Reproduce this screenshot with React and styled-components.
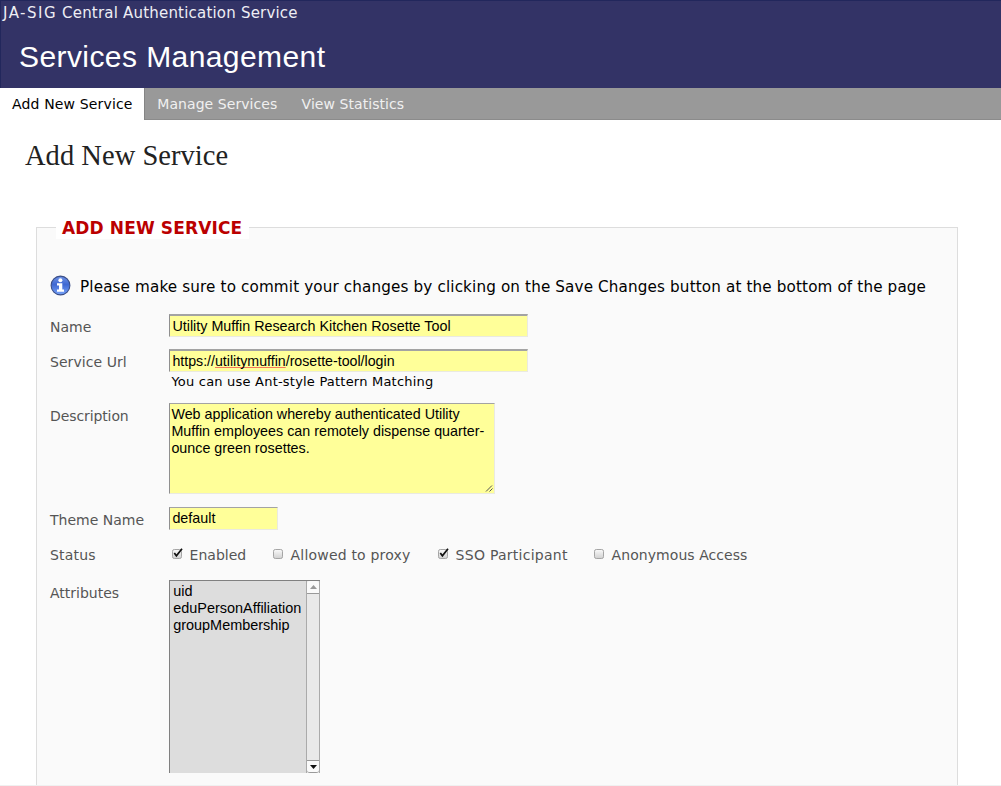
import React from "react";
import styled, { createGlobalStyle } from "styled-components";

const sans = `"DejaVu Sans", Verdana, sans-serif`;
const arial = `"Liberation Sans", Arial, sans-serif`;

const Global = createGlobalStyle`
  * { box-sizing: border-box; }
  body { margin: 0; background: #fff; overflow: hidden; }
`;
const Page = styled.div`
  width: 1001px;
  height: 786px;
  overflow: hidden;
  font-family: ${sans};
  color: #000;
  white-space: nowrap;
  border-bottom: 1px solid #f0f0f0;
`;
const Header = styled.header`
  height: 88px;
  background: #333366;
  border-top: 1px solid #22275c;
  border-left: 1px solid #22275c;
  color: #fff;
`;
const Brand = styled.div`
  padding: 3px 0 0 2px;
  font-size: 15px;
  line-height: 19px;
  letter-spacing: 0.2px;
  color: #eeeef4;
`;
const Wide = styled.span`
  letter-spacing: 1.5px;
`;
const AppTitle = styled.h1`
  margin: 16px 0 0 18px;
  font: 400 30px/36px ${arial};
  letter-spacing: 0.42px;
`;
const Tabs = styled.nav`
  display: flex;
  height: 32px;
  background: #999;
  border-bottom: 1px solid #8b8b8b;
`;
const Tab = styled.a`
  height: 32px;
  padding: 0 12px 0 12.3px;
  font-size: 14px;
  line-height: 32px;
  letter-spacing: ${(p) => (p.$active ? 0.15 : 0.06)}px;
  color: ${(p) => (p.$active ? "#000" : "#f0f0f0")};
  background: ${(p) => (p.$active ? "#fff" : "transparent")};
  ${(p) => p.$active && "width: 145px; padding: 0 0 0 12px; border-right: 1px solid #858585;"}
`;
const PageTitle = styled.h2`
  margin: 18px 0 0 25px;
  font: 400 28.5px/36px "Liberation Serif", "Times New Roman", serif;
  letter-spacing: 0.04px;
  color: #222;
`;
const Panel = styled.section`
  margin: 53px 43px 0 36px;
  height: 600px;
  background: #fafafa;
  border: 1px solid #ddd;
  padding-left: 13px;
`;
const Legend = styled.h3`
  width: 193px;
  height: 22px;
  margin: -11px 0 0 6px;
  padding-left: 6px;
  background: #fff;
  color: #bb0000;
  font-size: 17px;
  line-height: 23px;
  letter-spacing: 0.13px;
`;
const Notice = styled.p`
  display: flex;
  align-items: center;
  gap: 9px;
  margin: 35px 0 18px;
  height: 22px;
  font-size: 15.2px;
  line-height: 24px;
  letter-spacing: 0.135px;
`;
const NoticeText = styled.span`
  padding-top: 4px;
`;
const Row = styled.div`
  display: grid;
  grid-template-columns: 119px 1fr;
  align-items: start;
  height: ${(p) => p.$h}px;
`;
const Label = styled.label`
  padding-top: 3px;
  font-size: 14px;
  line-height: 20px;
  letter-spacing: ${(p) => p.$ls ?? 0}px;
  color: #555;
`;
const Field = styled.div`
  display: flex;
  justify-content: space-between;
  width: ${(p) => p.$w}px;
  height: 23px;
  padding-left: 2.4px;
  background: #ffff99;
  border: 1px solid #eaeae0;
  border-top: ${(p) => p.$edge ?? 2}px solid #a3a3a3;
  border-left: 1px solid #8f8f8f;
  font: ${(p) => p.$size ?? 14.33}px/21px ${arial};
`;
const Area = styled(Field)`
  height: 91px;
  padding: 2px 0 0 1.4px;
  line-height: 17px;
  white-space: pre-line;
`;
const Misspelt = styled.span`
  text-decoration: underline solid #f5785c 1px;
  text-decoration-skip-ink: none;
  text-underline-offset: 1px;
`;
const Grip = styled.svg`
  align-self: flex-end;
  flex: none;
`;
const Hint = styled.div`
  padding: 0 0 0 2.4px;
  font-size: 13px;
  line-height: 20px;
  letter-spacing: 0.21px;
`;
const Options = styled.div`
  display: flex;
  padding-top: 3px;
  color: #555;
  font-size: 14px;
  line-height: 20px;
`;
const Option = styled.div`
  display: flex;
  align-items: center;
  gap: 6px;
  width: ${(p) => p.$w}px;
  padding-left: 1.6px;
  letter-spacing: ${(p) => p.$ls ?? 0}px;
`;
const List = styled.div`
  display: flex;
  justify-content: space-between;
  width: 151px;
  height: 193px;
  background: #ddd;
  border-top: 1px solid #808080;
  border-left: 1px solid #808080;
  font: 14.45px/17px ${arial};
`;
const Items = styled.div`
  padding: 2px 0 0 3.2px;
`;
const Scroll = styled.div`
  display: flex;
  flex-direction: column;
  justify-content: space-between;
  width: 14px;
  background: #e9e9e9;
  border-left: 1px solid #aaa;
  border-right: 1px solid #aaa;
`;
const ScrollButton = styled.div`
  display: flex;
  align-items: center;
  justify-content: center;
  height: 13px;
  background: #fafafa;
  border-top: ${(p) => (p.$down ? "1px solid #999" : "0")};
  border-bottom: 1px solid #999;
  border-radius: ${(p) => (p.$down ? "0 0 3px 3px" : "3px 3px 0 0")};
`;

const InfoIcon = () => (
  <svg width="21" height="21" viewBox="0 0 21 21">
    <defs>
      <linearGradient id="info" x1="0" y1="0" x2="0" y2="1">
        <stop offset="0" stopColor="#6f93e6" />
        <stop offset=".45" stopColor="#3f68d2" />
        <stop offset="1" stopColor="#78a4fa" />
      </linearGradient>
    </defs>
    <circle cx="10.5" cy="10.5" r="9.4" fill="url(#info)" stroke="#3b4f88" strokeWidth="1.1" />
    <circle cx="10.4" cy="5.2" r="2" fill="#fff" />
    <path d="M7 8.2h5.3v6.3H14v2.2H7v-2.2h2v-4.1H7z" fill="#fff" />
  </svg>
);
const Check = ({ on }) => (
  <svg width="13" height="14" viewBox="0 0 13 14">
    <defs>
      <linearGradient id="box" x1="0" y1="0" x2="0" y2="1">
        <stop offset="0" stopColor="#fafafa" />
        <stop offset="1" stopColor="#d0d0d0" />
      </linearGradient>
    </defs>
    <rect x="1.5" y="1.5" width="9" height="9" rx="1.8" fill="url(#box)" stroke="#a5a5a5" />
    {on && <path d="M3.3 5 5.4 7.8 11 0.8" fill="none" stroke="#111" strokeWidth="1.7" />}
  </svg>
);

export default function App() {
  return (
    <Page>
      <Global />
      <Header>
        <Brand><Wide>JA-SIG</Wide> Central Authentication Service</Brand>
        <AppTitle>Services Management</AppTitle>
      </Header>
      <Tabs>
        <Tab $active>Add New Service</Tab>
        <Tab>Manage Services</Tab>
        <Tab>View Statistics</Tab>
      </Tabs>
      <PageTitle>Add New Service</PageTitle>
      <Panel>
        <Legend>ADD NEW SERVICE</Legend>
        <Notice>
          <InfoIcon />
          <NoticeText>Please make sure to commit your changes by clicking on the Save Changes button at the bottom of the page</NoticeText>
        </Notice>
        <Row $h={35}>
          <Label>Name</Label>
          <Field $w={359}><span>Utility Muffin Research Kitchen Rosette Tool</span></Field>
        </Row>
        <Row $h={54}>
          <Label $ls={0.06}>Service Url</Label>
          <div>
            <Field $w={359} $size={14.2}><span>https://<Misspelt>utilitymuffin</Misspelt>/rosette-tool/login</span></Field>
            <Hint>You can use Ant-style Pattern Matching</Hint>
          </div>
        </Row>
        <Row $h={104}>
          <Label $ls={-0.1}>Description</Label>
          <Area $w={326} $edge={1} $size={14.3}>
            <span>{"Web application whereby authenticated Utility\nMuffin employees can remotely dispense quarter-\nounce green rosettes."}</span>
            <Grip width="9" height="9" viewBox="0 0 9 9">
              <path d="M1 7.5 7 1.5M4.5 7.5 7.5 4.5" stroke="#555" strokeWidth="1" />
            </Grip>
          </Area>
        </Row>
        <Row $h={35}>
          <Label>Theme Name</Label>
          <Field $w={109} $edge={1}><span>default</span></Field>
        </Row>
        <Row $h={38}>
          <Label $ls={0.2}>Status</Label>
          <Options>
            <Option $w={101}><Check on />Enabled</Option>
            <Option $w={165} $ls={0.19}><Check />Allowed to proxy</Option>
            <Option $w={156} $ls={0.26}><Check on />SSO Participant</Option>
            <Option $ls={0.06}><Check />Anonymous Access</Option>
          </Options>
        </Row>
        <Row $h={200}>
          <Label>Attributes</Label>
          <List>
            <Items><div>uid</div><div>eduPersonAffiliation</div><div>groupMembership</div></Items>
            <Scroll>
              <ScrollButton><svg width="7" height="4"><path d="M0 4 3.5 0 7 4z" fill="#999" /></svg></ScrollButton>
              <ScrollButton $down><svg width="7" height="4"><path d="M0 0 3.5 4 7 0z" fill="#111" /></svg></ScrollButton>
            </Scroll>
          </List>
        </Row>
      </Panel>
    </Page>
  );
}
